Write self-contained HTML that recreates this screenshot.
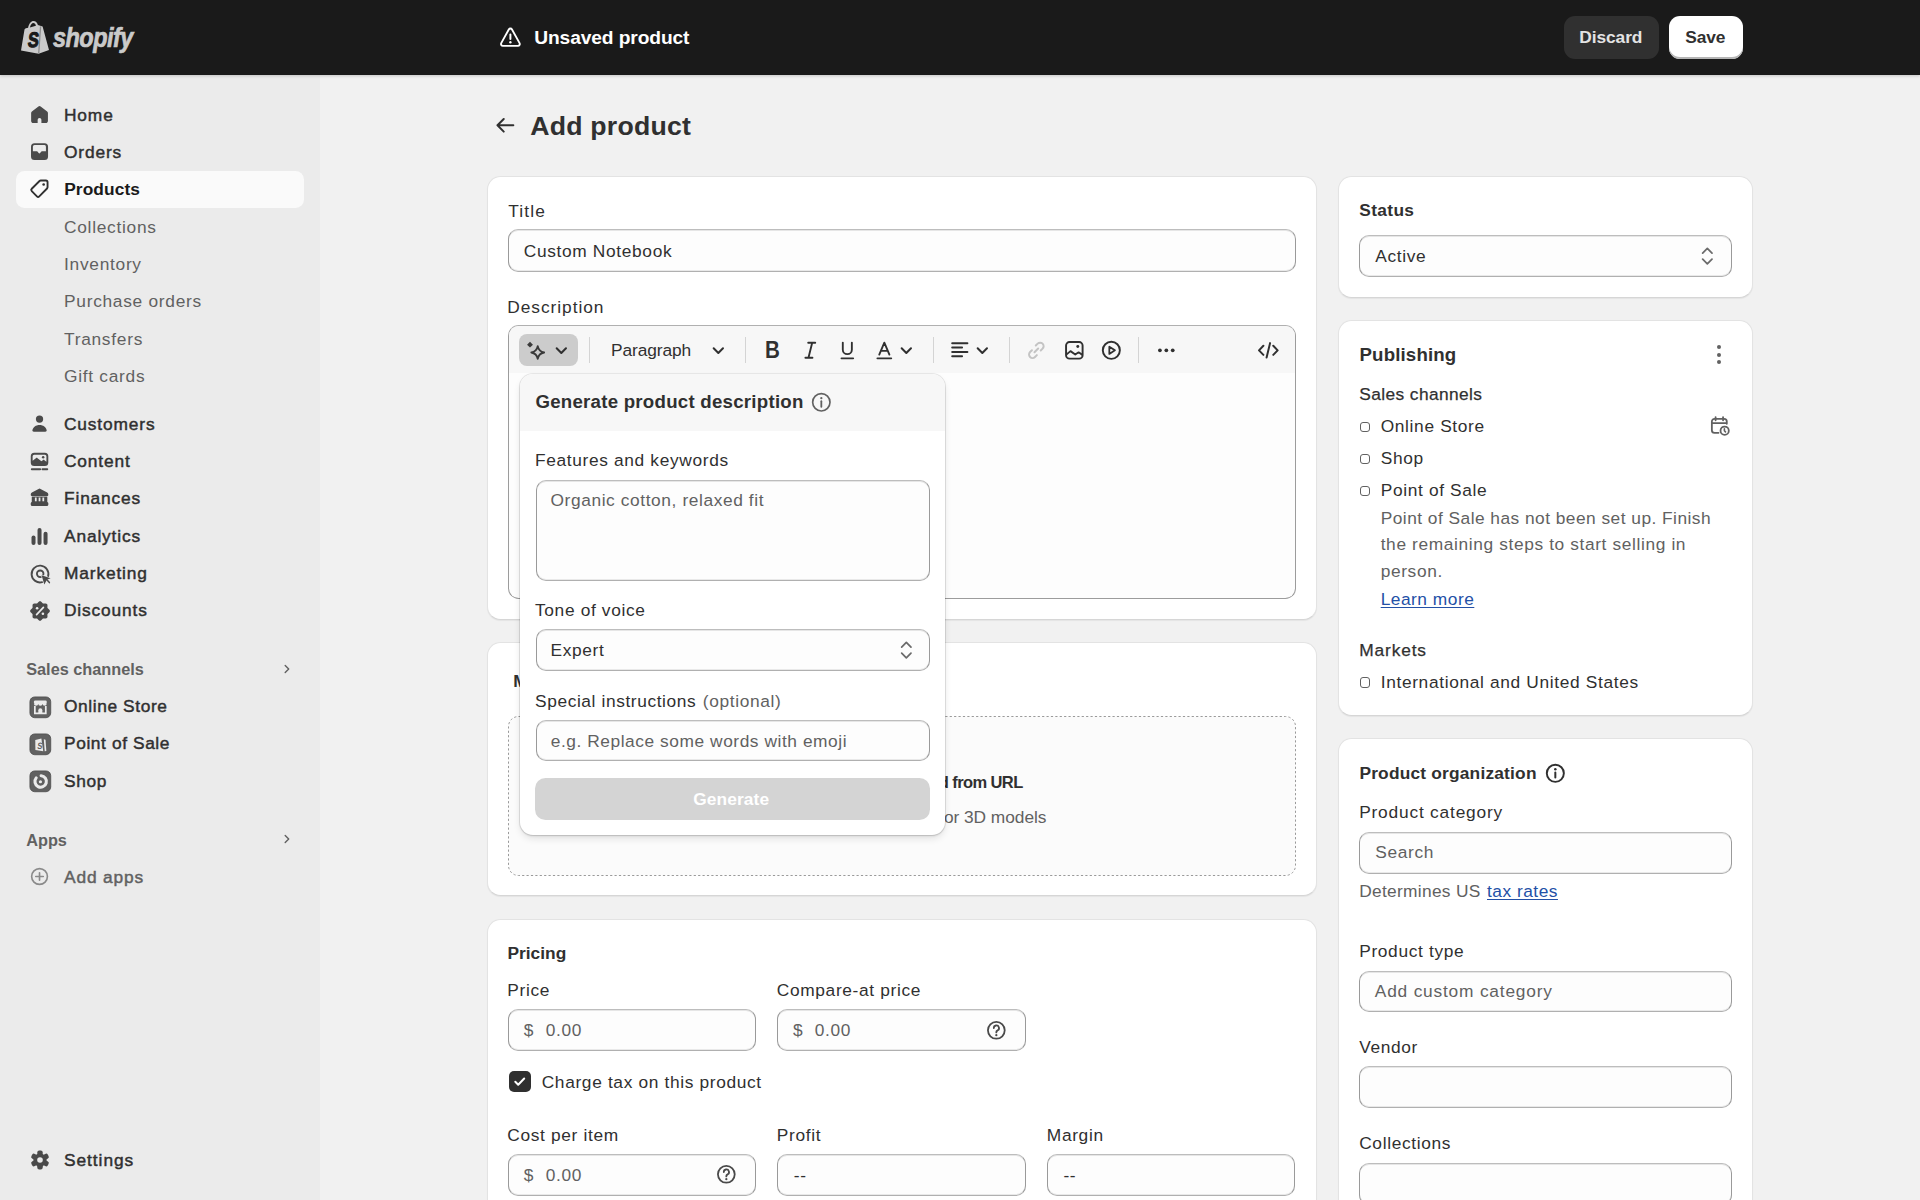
<!DOCTYPE html>
<html><head><meta charset="utf-8"><title>Add product</title>
<style>
html,body{margin:0;padding:0;}
body{width:1920px;height:1200px;overflow:hidden;position:relative;background:#f1f1f1;font-family:"Liberation Sans",sans-serif;color:#303030;}
.t{position:absolute;white-space:pre;}
.b{position:absolute;box-sizing:border-box;}
svg.b{overflow:visible;}
</style></head><body>
<div class="b" style="left:0px;top:75px;width:320px;height:1125px;background:#ebebeb;"></div>
<div class="b" style="left:0px;top:0px;width:1920px;height:75px;background:#1a1a1a;box-shadow:0 1px 3px rgba(0,0,0,0.18);z-index:5;"></div>
<div style="position:absolute;left:0;top:0;width:1920px;height:75px;z-index:6;">
<svg class="b" style="left:20px;top:20px;" width="30" height="34" viewBox="0 0 30 34"><path fill="#cacaca" d="M1 30.6 L4.5 9.6 Q4.8 8.5 6 8.3 L8.1 7.8 C8.9 3.4 11.2 1 13.5 1 C15.6 1 17.1 2.5 17.9 5.1 L22.6 6.5 L29 30.1 L18.6 33.7 Z"/>
<path fill="#1a1a1a" d="M9.9 7.4 C10.6 4.5 11.9 2.9 13.4 2.9 C14.6 2.9 15.5 3.9 15.9 5.7 Z"/>
<path stroke="#8e8e8e" stroke-width="1.3" d="M20.6 6.4 L18.7 33.5"/>
<text x="0" y="0" transform="translate(7.2,27.3) scale(0.78,1) skewX(-8)" font-family="Liberation Sans" font-weight="700" font-size="21" fill="#1a1a1a" stroke="#1a1a1a" stroke-width="1.1">S</text></svg>
</div>
<div class="t " style="left:52.7px;top:22.00px;font-size:27px;line-height:32px;font-weight:700;color:#cacaca;letter-spacing:-0.6px;font-style:italic;z-index:6;transform:scaleX(0.87);transform-origin:0 0;-webkit-text-stroke:0.7px #cacaca;">shopify</div>
<svg class="b" style="left:497.85px;top:25.200000000000003px;z-index:6;" width="24.8" height="24.8" viewBox="0 0 20 20"><path fill="none" stroke="#fff" stroke-width="1.5" stroke-linejoin="round" d="M8.7 3.6 a1.5 1.5 0 0 1 2.6 0 l6.1 11 a1.5 1.5 0 0 1 -1.3 2.2 H3.9 a1.5 1.5 0 0 1 -1.3 -2.2 Z"/>
<path stroke="#fff" stroke-width="1.6" stroke-linecap="round" d="M10 7.6 V11.2"/><circle cx="10" cy="13.9" r="0.95" fill="#fff"/></svg>
<div class="t " style="left:534.2px;top:25.70px;font-size:19.2px;line-height:23px;font-weight:700;color:#ffffff;letter-spacing:-0.1px;z-index:6;">Unsaved product</div>
<div class="b" style="left:1563.5px;top:16px;width:95px;height:42.5px;background:#303030;border-radius:11px;z-index:6;"></div>
<div class="t " style="left:1579.2px;top:27.30px;font-size:17.33px;line-height:21px;font-weight:700;color:#e3e3e3;letter-spacing:-0.05px;z-index:6;">Discard</div>
<div class="b" style="left:1669px;top:16px;width:74px;height:42.5px;background:#ffffff;border-radius:11px;box-shadow:inset 0 -2px 0 #b5b5b5;z-index:6;"></div>
<div class="t " style="left:1685.2px;top:27.30px;font-size:17.33px;line-height:21px;font-weight:700;color:#303030;letter-spacing:-0.05px;z-index:6;">Save</div>
<div class="b" style="left:16px;top:171px;width:288px;height:37px;background:#fafafa;border-radius:8.5px;"></div>
<div class="t " style="left:64.0px;top:104.75px;font-size:17.33px;line-height:21px;font-weight:400;color:#303030;letter-spacing:0.85px;-webkit-text-stroke:0.45px #303030;">Home</div>
<svg class="b" style="left:27.4651px;top:101.7151px;" width="25.0698" height="25.0698" viewBox="0 0 20 20"><path fill="#4a4a4a" d="M9.1 3.5a1.5 1.5 0 0 1 1.8 0l5.2 4.1c.4.3.6.8.6 1.2v6.3c0 1-.8 1.7-1.7 1.7h-3.5v-2.6a1.5 1.5 0 0 0-3 0v2.6H5c-1 0-1.7-.8-1.7-1.7V8.8c0-.5.2-.9.6-1.2z"/></svg>
<div class="t " style="left:64.0px;top:142.00px;font-size:17.33px;line-height:21px;font-weight:400;color:#303030;letter-spacing:0.85px;-webkit-text-stroke:0.45px #303030;">Orders</div>
<svg class="b" style="left:27.4651px;top:138.9651px;" width="25.0698" height="25.0698" viewBox="0 0 20 20"><path fill="#4a4a4a" fill-rule="evenodd" d="M6 3.3h8a2.8 2.8 0 0 1 2.8 2.8v7.8a2.8 2.8 0 0 1-2.8 2.8H6a2.8 2.8 0 0 1-2.8-2.8V6.1A2.8 2.8 0 0 1 6 3.3zM6 4.8a1.3 1.3 0 0 0-1.3 1.3v3.7h3.1c.4 0 .7.2.9.5l.6.9c.3.4.9.4 1.2 0l.6-.9c.2-.3.5-.5.9-.5h3.1V6.1A1.3 1.3 0 0 0 14 4.8z"/></svg>
<div class="t " style="left:64.2px;top:179.25px;font-size:17.33px;line-height:21px;font-weight:700;color:#1a1a1a;letter-spacing:0.1px;">Products</div>
<svg class="b" style="left:27.4651px;top:176.2151px;" width="25.0698" height="25.0698" viewBox="0 0 20 20"><path fill="none" stroke="#303030" stroke-width="1.5" stroke-linejoin="round" d="M11 3.6h4.1c.7 0 1.3.6 1.3 1.3V9c0 .4-.2.7-.4 1l-6.2 6.2c-.5.5-1.4.5-1.9 0L3.8 12.1c-.5-.5-.5-1.4 0-1.9L10 4c.3-.3.6-.4 1-.4z"/><circle cx="13.3" cy="6.8" r="1.05" fill="#303030"/></svg>
<div class="t " style="left:64.0px;top:216.60px;font-size:17.33px;line-height:21px;font-weight:400;color:#616161;letter-spacing:0.72px;">Collections</div>
<div class="t " style="left:64.0px;top:254.00px;font-size:17.33px;line-height:21px;font-weight:400;color:#616161;letter-spacing:0.72px;">Inventory</div>
<div class="t " style="left:64.0px;top:291.30px;font-size:17.33px;line-height:21px;font-weight:400;color:#616161;letter-spacing:0.72px;">Purchase orders</div>
<div class="t " style="left:64.0px;top:328.60px;font-size:17.33px;line-height:21px;font-weight:400;color:#616161;letter-spacing:0.72px;">Transfers</div>
<div class="t " style="left:64.0px;top:365.90px;font-size:17.33px;line-height:21px;font-weight:400;color:#616161;letter-spacing:0.72px;">Gift cards</div>
<div class="t " style="left:64.0px;top:413.60px;font-size:17.33px;line-height:21px;font-weight:400;color:#303030;letter-spacing:0.85px;-webkit-text-stroke:0.45px #303030;">Customers</div>
<svg class="b" style="left:27.4651px;top:410.56510000000003px;" width="25.0698" height="25.0698" viewBox="0 0 20 20"><circle cx="10" cy="6.4" r="2.9" fill="#4a4a4a"/><path fill="#4a4a4a" d="M4.3 15.4c.4-2.6 2.8-4.3 5.7-4.3s5.3 1.7 5.7 4.3c.1.7-.4 1.1-1.1 1.1H5.4c-.7 0-1.2-.4-1.1-1.1z"/></svg>
<div class="t " style="left:64.0px;top:450.90px;font-size:17.33px;line-height:21px;font-weight:400;color:#303030;letter-spacing:0.85px;-webkit-text-stroke:0.45px #303030;">Content</div>
<svg class="b" style="left:27.4651px;top:448.6651px;" width="25.0698" height="25.0698" viewBox="0 0 20 20"><path fill="#4a4a4a" fill-rule="evenodd" d="M5.8 3h8.4A2.8 2.8 0 0 1 17 5.8v4.9a2.8 2.8 0 0 1-2.8 2.8H5.8A2.8 2.8 0 0 1 3 10.7V5.8A2.8 2.8 0 0 1 5.8 3zm0 1.5a1.3 1.3 0 0 0-1.3 1.3v3.6l2.6-2.1c.4-.3.9-.3 1.3 0l3.1 2.4 1.1-.8c.4-.3.9-.3 1.3 0l1.6 1.2V5.8a1.3 1.3 0 0 0-1.3-1.3z"/><circle cx="12.9" cy="6.6" r="1" fill="#4a4a4a"/><path stroke="#4a4a4a" stroke-width="1.5" stroke-linecap="round" d="M3.8 16.2h6.7M12.3 16.2h3.9"/></svg>
<div class="t " style="left:64.0px;top:488.20px;font-size:17.33px;line-height:21px;font-weight:400;color:#303030;letter-spacing:0.85px;-webkit-text-stroke:0.45px #303030;">Finances</div>
<svg class="b" style="left:27.4651px;top:485.1651px;" width="25.0698" height="25.0698" viewBox="0 0 20 20"><path fill="#4a4a4a" d="M9.2 3.1a1.7 1.7 0 0 1 1.6 0l5.3 2.9c.6.3.9.9.9 1.5v.5c0 .4-.3.7-.7.7H3.7c-.4 0-.7-.3-.7-.7v-.5c0-.6.3-1.2.9-1.5z"/><rect x="3.8" y="9.2" width="12.4" height="4.6" fill="#4a4a4a"/><rect x="6.3" y="10" width="1.4" height="3" fill="#ebebeb"/><rect x="9.3" y="10" width="1.4" height="3" fill="#ebebeb"/><rect x="12.3" y="10" width="1.4" height="3" fill="#ebebeb"/><rect x="3" y="13.6" width="14" height="3.2" rx="1.1" fill="#4a4a4a"/></svg>
<div class="t " style="left:64.0px;top:525.50px;font-size:17.33px;line-height:21px;font-weight:400;color:#303030;letter-spacing:0.85px;-webkit-text-stroke:0.45px #303030;">Analytics</div>
<svg class="b" style="left:27.4651px;top:524.1651px;" width="25.0698" height="25.0698" viewBox="0 0 20 20"><rect x="3.6" y="9.2" width="3.2" height="7.6" rx="1.6" fill="#4a4a4a"/><rect x="8.4" y="3.2" width="3.2" height="13.6" rx="1.6" fill="#4a4a4a"/><rect x="13.2" y="6.2" width="3.2" height="10.6" rx="1.6" fill="#4a4a4a"/></svg>
<div class="t " style="left:64.0px;top:562.80px;font-size:17.33px;line-height:21px;font-weight:400;color:#303030;letter-spacing:0.85px;-webkit-text-stroke:0.45px #303030;">Marketing</div>
<svg class="b" style="left:26px;top:559.5px;" width="28" height="28" viewBox="0 0 28 28"><path fill="none" stroke="#4a4a4a" stroke-width="1.9" stroke-linecap="round" d="M16.17 22.11A8.4 8.4 0 1 1 22.11 16.17"/><circle cx="14.2" cy="13.8" r="3.3" fill="none" stroke="#4a4a4a" stroke-width="1.8"/><path fill="#4a4a4a" stroke="#ebebeb" stroke-width="1.1" paint-order="stroke" stroke-linejoin="round" d="M15.6 15.3L24.6 18.3 20.9 19.8 18.3 24.6Z"/><path stroke="#4a4a4a" stroke-width="1.5" stroke-linecap="round" d="M20.6 19.6L23.4 22.6"/></svg>
<div class="t " style="left:64.0px;top:600.10px;font-size:17.33px;line-height:21px;font-weight:400;color:#303030;letter-spacing:0.85px;-webkit-text-stroke:0.45px #303030;">Discounts</div>
<svg class="b" style="left:26.1px;top:596.7px;" width="28" height="28" viewBox="0 0 28 28"><path fill="#4a4a4a" d="M23.85 14.00 L23.72 14.64 L23.34 15.23 L22.83 15.76 L22.28 16.22 L21.83 16.66 L21.53 17.12 L21.41 17.66 L21.43 18.29 L21.48 19.00 L21.48 19.74 L21.32 20.42 L20.97 20.97 L20.42 21.32 L19.74 21.48 L19.00 21.48 L18.29 21.43 L17.66 21.41 L17.12 21.53 L16.66 21.83 L16.22 22.28 L15.76 22.83 L15.23 23.34 L14.64 23.72 L14.00 23.85 L13.36 23.72 L12.77 23.34 L12.24 22.83 L11.78 22.28 L11.34 21.83 L10.88 21.53 L10.34 21.41 L9.71 21.43 L9.00 21.48 L8.26 21.48 L7.58 21.32 L7.03 20.97 L6.68 20.42 L6.52 19.74 L6.52 19.00 L6.57 18.29 L6.59 17.66 L6.47 17.12 L6.17 16.66 L5.72 16.22 L5.17 15.76 L4.66 15.23 L4.28 14.64 L4.15 14.00 L4.28 13.36 L4.66 12.77 L5.17 12.24 L5.72 11.78 L6.17 11.34 L6.47 10.88 L6.59 10.34 L6.57 9.71 L6.52 9.00 L6.52 8.26 L6.68 7.58 L7.03 7.03 L7.58 6.68 L8.26 6.52 L9.00 6.52 L9.71 6.57 L10.34 6.59 L10.88 6.47 L11.34 6.17 L11.78 5.72 L12.24 5.17 L12.77 4.66 L13.36 4.28 L14.00 4.15 L14.64 4.28 L15.23 4.66 L15.76 5.17 L16.22 5.72 L16.66 6.17 L17.12 6.47 L17.66 6.59 L18.29 6.57 L19.00 6.52 L19.74 6.52 L20.42 6.68 L20.97 7.03 L21.32 7.58 L21.48 8.26 L21.48 9.00 L21.43 9.71 L21.41 10.34 L21.53 10.88 L21.83 11.34 L22.28 11.78 L22.83 12.24 L23.34 12.77 L23.72 13.36Z"/><path stroke="#ebebeb" stroke-width="1.7" stroke-linecap="round" d="M10.6 17.6L17.4 10.4"/><circle cx="11.1" cy="11.3" r="1.3" fill="#ebebeb"/><circle cx="16.9" cy="16.8" r="1.3" fill="#ebebeb"/></svg>
<div class="t " style="left:26.2px;top:659.20px;font-size:16.3px;line-height:20px;font-weight:700;color:#616161;letter-spacing:0px;">Sales channels</div>
<svg class="b" style="left:277px;top:659px;" width="20" height="20" viewBox="0 0 20 20"><path fill="none" stroke="#616161" stroke-width="1.4" stroke-linecap="round" stroke-linejoin="round" d="M8.2 6.5l3.5 3.5-3.5 3.5"/></svg>
<div class="t " style="left:64.0px;top:696.00px;font-size:17.33px;line-height:21px;font-weight:400;color:#303030;letter-spacing:0.6px;-webkit-text-stroke:0.45px #303030;">Online Store</div>
<svg class="b" style="left:26.67px;top:693.5699999999999px;" width="26.67" height="26.67" viewBox="0 0 20 20"><rect x="2.2" y="2.2" width="15.6" height="15.6" rx="3.6" fill="#616161"/><rect x="2.2" y="2.2" width="15.6" height="15.6" rx="3.6" fill="none" stroke="#4a4a4a" stroke-width="0.6"/><rect x="5.2" y="4.9" width="9.6" height="2.6" rx="0.9" fill="#ebebeb"/><path fill="#ebebeb" d="M5.2 7.3h3.2a1.6 1.6 0 0 1-3.2 0zM8.4 7.3h3.2a1.6 1.6 0 0 1-3.2 0zM11.6 7.3h3.2a1.6 1.6 0 0 1-3.2 0z"/><path fill="none" stroke="#ebebeb" stroke-width="1.3" d="M5.9 9v5.5h8.2V9"/><path fill="#ebebeb" d="M8.5 14.6v-2.4a1.5 1.5 0 0 1 3 0v2.4z"/></svg>
<div class="t " style="left:64.0px;top:733.40px;font-size:17.33px;line-height:21px;font-weight:400;color:#303030;letter-spacing:0.6px;-webkit-text-stroke:0.45px #303030;">Point of Sale</div>
<svg class="b" style="left:26.67px;top:730.9699999999999px;" width="26.67" height="26.67" viewBox="0 0 20 20"><rect x="2.2" y="2.2" width="15.6" height="15.6" rx="3.6" fill="#616161"/><rect x="2.2" y="2.2" width="15.6" height="15.6" rx="3.6" fill="none" stroke="#4a4a4a" stroke-width="0.6"/><path fill="#ebebeb" d="M6.2 6.8l4.6-1.2 1.4 9.6-5.9-.9z"/><path fill="#ebebeb" d="M12.6 6.2l1.3.4.6 8.4-1.2.2z"/><text x="0" y="0" transform="translate(7.5,13.3) scale(0.8,1) skewX(-10)" font-family="Liberation Sans" font-weight="700" font-size="7" fill="#616161">S</text></svg>
<div class="t " style="left:64.0px;top:770.70px;font-size:17.33px;line-height:21px;font-weight:400;color:#303030;letter-spacing:0.6px;-webkit-text-stroke:0.45px #303030;">Shop</div>
<svg class="b" style="left:26.67px;top:768.27px;" width="26.67" height="26.67" viewBox="0 0 20 20"><rect x="2.2" y="2.2" width="15.6" height="15.6" rx="3.6" fill="#616161"/><rect x="2.2" y="2.2" width="15.6" height="15.6" rx="3.6" fill="none" stroke="#4a4a4a" stroke-width="0.6"/><path fill="none" stroke="#ebebeb" stroke-width="2.3" stroke-linecap="round" d="M6.9 7.4A4.3 4.3 0 1 0 10.6 5.8"/><circle cx="10.1" cy="10.3" r="1.2" fill="#ebebeb"/></svg>
<div class="t " style="left:26.2px;top:829.90px;font-size:16.3px;line-height:20px;font-weight:700;color:#616161;letter-spacing:0px;">Apps</div>
<svg class="b" style="left:277px;top:829px;" width="20" height="20" viewBox="0 0 20 20"><path fill="none" stroke="#616161" stroke-width="1.4" stroke-linecap="round" stroke-linejoin="round" d="M8.2 6.5l3.5 3.5-3.5 3.5"/></svg>
<div class="t " style="left:64.0px;top:866.70px;font-size:17.33px;line-height:21px;font-weight:400;color:#616161;letter-spacing:0.85px;-webkit-text-stroke:0.45px #616161;">Add apps</div>
<svg class="b" style="left:27.4651px;top:863.9651px;" width="25.0698" height="25.0698" viewBox="0 0 20 20"><circle cx="10" cy="10" r="6.3" fill="none" stroke="#8a8a8a" stroke-width="1.3"/><path stroke="#8a8a8a" stroke-width="1.3" stroke-linecap="round" d="M10 7v6M7 10h6"/></svg>
<div class="t " style="left:64.0px;top:1149.80px;font-size:17.33px;line-height:21px;font-weight:400;color:#303030;letter-spacing:0.95px;-webkit-text-stroke:0.45px #303030;">Settings</div>
<svg class="b" style="left:26px;top:1145.8px;" width="28" height="28" viewBox="0 0 28 28"><circle cx="14" cy="14" r="6.6" fill="#4a4a4a"/><rect x="11.3" y="4.6" width="5.4" height="5" rx="1.9" transform="rotate(0 14 14)" fill="#4a4a4a"/><rect x="11.3" y="4.6" width="5.4" height="5" rx="1.9" transform="rotate(60 14 14)" fill="#4a4a4a"/><rect x="11.3" y="4.6" width="5.4" height="5" rx="1.9" transform="rotate(120 14 14)" fill="#4a4a4a"/><rect x="11.3" y="4.6" width="5.4" height="5" rx="1.9" transform="rotate(180 14 14)" fill="#4a4a4a"/><rect x="11.3" y="4.6" width="5.4" height="5" rx="1.9" transform="rotate(240 14 14)" fill="#4a4a4a"/><rect x="11.3" y="4.6" width="5.4" height="5" rx="1.9" transform="rotate(300 14 14)" fill="#4a4a4a"/><circle cx="14" cy="14" r="2.8" fill="#ebebeb"/></svg>
<svg class="b" style="left:492.3px;top:112.4px;" width="26.67" height="26.67" viewBox="0 0 20 20"><path fill="none" stroke="#303030" stroke-width="1.5" stroke-linecap="round" stroke-linejoin="round" d="M16 10H4.3M8.8 5.3L4.1 10l4.7 4.7"/></svg>
<div class="t " style="left:530.2px;top:110.00px;font-size:26.67px;line-height:32px;font-weight:700;color:#303030;letter-spacing:0.22px;">Add product</div>
<div class="b" style="left:487px;top:176px;width:830px;height:444px;background:#ffffff;border-radius:13.5px;border:1px solid #e3e3e3;border-bottom-color:#d6d6d6;box-shadow:0 1px 1px rgba(26,26,26,0.06);"></div>
<div class="t " style="left:508.3px;top:200.50px;font-size:17.33px;line-height:21px;font-weight:400;color:#303030;letter-spacing:1.1px;">Title</div>
<div class="b" style="left:508px;top:229px;width:788px;height:43px;background:#fdfdfd;border:1px solid #9a9a9a;border-top-color:#bdbdbd;border-bottom-color:#b0b0b0;box-shadow:inset 0 1px 0 #e6e6e6, inset 0 -1px 0 #e9e9e9;border-radius:10px;"></div>
<div class="t " style="left:523.8px;top:240.50px;font-size:17.33px;line-height:21px;font-weight:400;color:#303030;letter-spacing:0.65px;">Custom Notebook</div>
<div class="t " style="left:507.3px;top:296.50px;font-size:17.33px;line-height:21px;font-weight:400;color:#303030;letter-spacing:0.95px;">Description</div>
<div class="b" style="left:508px;top:325px;width:788px;height:274px;background:#fdfdfd;border:1px solid #9c9c9c;border-top-color:#b0b0b0;border-radius:10.67px;overflow:hidden;"></div>
<div class="b" style="left:509px;top:326px;width:786px;height:47px;background:#f7f7f7;border-radius:9.67px 9.67px 0 0;"></div>
<div class="b" style="left:519.2px;top:334px;width:58.5px;height:31.6px;background:#cccccc;border-radius:8px;"></div>
<svg class="b" style="left:524.3px;top:336.3px;" width="26.67" height="26.67" viewBox="0 0 20 20"><path fill="#3a3a3a" d="M4.5 4.3l2.2 2.2-2.2 2.2-2.2-2.2z"/><path fill="none" stroke="#3a3a3a" stroke-width="1.4" stroke-linejoin="round" d="M10.3 7.6c.55 2.9 1.9 4.25 4.8 4.8-2.9.55-4.25 1.9-4.8 4.8-.55-2.9-1.9-4.25-4.8-4.8 2.9-.55 4.25-1.9 4.8-4.8z"/></svg>
<svg class="b" style="left:548.4699999999999px;top:336.97px;" width="26.67" height="26.67" viewBox="0 0 20 20"><path fill="none" stroke="#303030" stroke-width="1.5" stroke-linecap="round" stroke-linejoin="round" d="M6.5 8.5L10 12l3.5-3.5"/></svg>
<div class="b" style="left:588.9px;top:337px;width:1px;height:25.5px;background:#d4d4d4;"></div>
<div class="t " style="left:611.0px;top:340.00px;font-size:17.33px;line-height:21px;font-weight:400;color:#303030;letter-spacing:-0.1px;">Paragraph</div>
<svg class="b" style="left:704.77px;top:336.97px;" width="26.67" height="26.67" viewBox="0 0 20 20"><path fill="none" stroke="#303030" stroke-width="1.5" stroke-linecap="round" stroke-linejoin="round" d="M6.5 8.5L10 12l3.5-3.5"/></svg>
<div class="b" style="left:745.0px;top:337px;width:1px;height:25.5px;background:#d4d4d4;"></div>
<div class="t " style="left:764.7px;top:335.70px;font-size:24.5px;line-height:28px;font-weight:700;color:#303030;letter-spacing:0px;transform:scaleX(0.84);transform-origin:left;">B</div>
<svg class="b" style="left:796.6px;top:336.5px;" width="26.67" height="26.67" viewBox="0 0 20 20"><path fill="none" stroke="#303030" stroke-width="1.4" stroke-linecap="round" d="M8.4 4.3h5.3M6.3 15.6h5.3M11.4 4.3L8.6 15.6"/></svg>
<svg class="b" style="left:834.0px;top:336.5px;" width="26.67" height="26.67" viewBox="0 0 20 20"><path fill="none" stroke="#303030" stroke-width="1.4" stroke-linecap="round" d="M6.6 4.2v5.3a3.4 3.4 0 0 0 6.8 0V4.2M5.6 16h8.8"/></svg>
<svg class="b" style="left:871.4px;top:336.5px;" width="26.67" height="26.67" viewBox="0 0 20 20"><path fill="none" stroke="#303030" stroke-width="1.4" stroke-linecap="round" stroke-linejoin="round" d="M6.2 13.2L10 4.2l3.8 9M7.4 10.4h5.2M4.8 16h10.4"/></svg>
<svg class="b" style="left:892.67px;top:336.97px;" width="26.67" height="26.67" viewBox="0 0 20 20"><path fill="none" stroke="#303030" stroke-width="1.5" stroke-linecap="round" stroke-linejoin="round" d="M6.5 8.5L10 12l3.5-3.5"/></svg>
<div class="b" style="left:933.0px;top:337px;width:1px;height:25.5px;background:#d4d4d4;"></div>
<svg class="b" style="left:947.3px;top:336.5px;" width="26.67" height="26.67" viewBox="0 0 20 20"><path fill="none" stroke="#303030" stroke-width="1.5" stroke-linecap="round" d="M3.9 4.6h11.4M3.9 7.9h7.4M3.9 11.2h11.4M3.9 14.5h7.4"/></svg>
<svg class="b" style="left:968.67px;top:336.97px;" width="26.67" height="26.67" viewBox="0 0 20 20"><path fill="none" stroke="#303030" stroke-width="1.5" stroke-linecap="round" stroke-linejoin="round" d="M6.5 8.5L10 12l3.5-3.5"/></svg>
<div class="b" style="left:1008.9px;top:337px;width:1px;height:25.5px;background:#d4d4d4;"></div>
<svg class="b" style="left:1023.3px;top:336.5px;" width="26.67" height="26.67" viewBox="0 0 20 20"><path fill="none" stroke="#c4c4c4" stroke-width="1.5" stroke-linecap="round" d="M8.6 11.4l2.8-2.8M9.6 6.4l1.4-1.4a2.6 2.6 0 0 1 3.7 3.7l-1.4 1.4M10.4 13.6l-1.4 1.4a2.6 2.6 0 0 1-3.7-3.7l1.4-1.4"/></svg>
<svg class="b" style="left:1060.6px;top:336.5px;" width="26.67" height="26.67" viewBox="0 0 20 20"><rect x="3.8" y="3.8" width="12.4" height="12.4" rx="2.6" fill="none" stroke="#303030" stroke-width="1.45"/><circle cx="12.6" cy="7.1" r="1.1" fill="#303030"/><path fill="none" stroke="#303030" stroke-width="1.4" stroke-linejoin="round" d="M4 13.2l3.1-2.6 3.6 2.6 2.5-1.7 2.9 1.9"/></svg>
<svg class="b" style="left:1098.1px;top:336.5px;" width="26.67" height="26.67" viewBox="0 0 20 20"><circle cx="10" cy="10" r="6.4" fill="none" stroke="#303030" stroke-width="1.45"/><path fill="none" stroke="#303030" stroke-width="1.35" stroke-linejoin="round" d="M8.5 7.3v5.4l4.2-2.7z"/></svg>
<div class="b" style="left:1137.8px;top:337px;width:1px;height:25.5px;background:#d4d4d4;"></div>
<svg class="b" style="left:1152.7px;top:336.5px;" width="26.67" height="26.67" viewBox="0 0 20 20"><circle cx="5.2" cy="10" r="1.4" fill="#303030"/><circle cx="10" cy="10" r="1.4" fill="#303030"/><circle cx="14.8" cy="10" r="1.4" fill="#303030"/></svg>
<svg class="b" style="left:1254.6px;top:336.5px;" width="26.67" height="26.67" viewBox="0 0 20 20"><path fill="none" stroke="#303030" stroke-width="1.5" stroke-linecap="round" stroke-linejoin="round" d="M6.3 6.6L3 10l3.3 3.4M13.7 6.6L17 10l-3.3 3.4M11.3 4.6l-2.6 10.8"/></svg>
<div class="b" style="left:487px;top:642px;width:830px;height:254px;background:#ffffff;border-radius:13.5px;border:1px solid #e3e3e3;border-bottom-color:#d6d6d6;box-shadow:0 1px 1px rgba(26,26,26,0.06);"></div>
<div class="t " style="left:513.2px;top:670.50px;font-size:17.33px;line-height:21px;font-weight:700;color:#303030;letter-spacing:0px;">Media</div>
<svg class="b" style="left:508px;top:716px;" width="788" height="160" viewBox="0 0 788 160"><rect x="0.5" y="0.5" width="787" height="159" rx="10" fill="#fbfbfb" stroke="#9a9a9a" stroke-width="1" stroke-dasharray="2.2 2.2"/></svg>
<div class="b" style="left:780px;top:765.5px;width:120px;height:37.3px;background:#ffffff;border-radius:10.67px;box-shadow:0 0 0 1px #e3e3e3, inset 0 -1px 0 #b5b5b5;"></div>
<div class="t " style="left:795.2px;top:771.90px;font-size:17.33px;line-height:21px;font-weight:700;color:#303030;letter-spacing:0px;">Upload new</div>
<div class="t " style="left:918.0px;top:772.40px;font-size:16.5px;line-height:20px;font-weight:700;color:#303030;letter-spacing:-0.6px;">Add from URL</div>
<div class="t " style="left:753.5px;top:806.70px;font-size:17.33px;line-height:21px;font-weight:400;color:#616161;letter-spacing:-0.05px;">Accepts images, videos, or 3D models</div>
<div class="b" style="left:487px;top:919px;width:830px;height:320px;background:#ffffff;border-radius:13.5px;border:1px solid #e3e3e3;border-bottom-color:#d6d6d6;box-shadow:0 1px 1px rgba(26,26,26,0.06);"></div>
<div class="t " style="left:507.5px;top:943.20px;font-size:17.33px;line-height:21px;font-weight:700;color:#303030;letter-spacing:0px;">Pricing</div>
<div class="t " style="left:507.3px;top:979.90px;font-size:17.33px;line-height:21px;font-weight:400;color:#303030;letter-spacing:0.65px;">Price</div>
<div class="t " style="left:776.8px;top:979.90px;font-size:17.33px;line-height:21px;font-weight:400;color:#303030;letter-spacing:0.65px;">Compare-at price</div>
<div class="b" style="left:508.1px;top:1009.2px;width:248px;height:42.2px;background:#fdfdfd;border:1px solid #9a9a9a;border-top-color:#bdbdbd;border-bottom-color:#b0b0b0;box-shadow:inset 0 1px 0 #e6e6e6, inset 0 -1px 0 #e9e9e9;border-radius:10px;"></div>
<div class="b" style="left:777.2px;top:1009.2px;width:248.5px;height:42.2px;background:#fdfdfd;border:1px solid #9a9a9a;border-top-color:#bdbdbd;border-bottom-color:#b0b0b0;box-shadow:inset 0 1px 0 #e6e6e6, inset 0 -1px 0 #e9e9e9;border-radius:10px;"></div>
<div class="t " style="left:523.8px;top:1019.80px;font-size:17.33px;line-height:21px;font-weight:400;color:#616161;letter-spacing:0.65px;">$</div>
<div class="t " style="left:545.7px;top:1019.80px;font-size:17.33px;line-height:21px;font-weight:400;color:#616161;letter-spacing:0.65px;">0.00</div>
<div class="t " style="left:792.9px;top:1019.80px;font-size:17.33px;line-height:21px;font-weight:400;color:#616161;letter-spacing:0.65px;">$</div>
<div class="t " style="left:814.8px;top:1019.80px;font-size:17.33px;line-height:21px;font-weight:400;color:#616161;letter-spacing:0.65px;">0.00</div>
<svg class="b" style="left:982.9699999999999px;top:1016.9699999999999px;" width="26.67" height="26.67" viewBox="0 0 20 20"><circle cx="10" cy="10" r="6.3" fill="none" stroke="#4a4a4a" stroke-width="1.35"/><path fill="none" stroke="#4a4a4a" stroke-width="1.35" stroke-linecap="round" d="M8.1 8.3a1.95 1.95 0 1 1 2.9 1.7c-.6.3-1 .7-1 1.3v.3"/><circle cx="10" cy="13.6" r="0.85" fill="#4a4a4a"/></svg>
<div class="b" style="left:509.1px;top:1071px;width:21.5px;height:21px;background:#303030;border-radius:5px;"></div>
<svg class="b" style="left:509.1px;top:1071px;" width="21.5" height="21" viewBox="0 0 21.5 21"><path fill="none" stroke="#fff" stroke-width="2" stroke-linecap="round" stroke-linejoin="round" d="M6.3 10.8l2.9 2.9 6-6.2"/></svg>
<div class="t " style="left:541.7px;top:1071.50px;font-size:17.33px;line-height:21px;font-weight:400;color:#303030;letter-spacing:0.65px;">Charge tax on this product</div>
<div class="t " style="left:507.3px;top:1124.50px;font-size:17.33px;line-height:21px;font-weight:400;color:#303030;letter-spacing:0.65px;">Cost per item</div>
<div class="t " style="left:776.8px;top:1124.50px;font-size:17.33px;line-height:21px;font-weight:400;color:#303030;letter-spacing:0.65px;">Profit</div>
<div class="t " style="left:1046.8px;top:1124.50px;font-size:17.33px;line-height:21px;font-weight:400;color:#303030;letter-spacing:0.65px;">Margin</div>
<div class="b" style="left:508.1px;top:1153.9px;width:248px;height:42.2px;background:#fdfdfd;border:1px solid #9a9a9a;border-top-color:#bdbdbd;border-bottom-color:#b0b0b0;box-shadow:inset 0 1px 0 #e6e6e6, inset 0 -1px 0 #e9e9e9;border-radius:10px;"></div>
<div class="b" style="left:777.2px;top:1153.9px;width:248.5px;height:42.2px;background:#fdfdfd;border:1px solid #9a9a9a;border-top-color:#bdbdbd;border-bottom-color:#b0b0b0;box-shadow:inset 0 1px 0 #e6e6e6, inset 0 -1px 0 #e9e9e9;border-radius:10px;"></div>
<div class="b" style="left:1047.4px;top:1153.9px;width:248px;height:42.2px;background:#fdfdfd;border:1px solid #9a9a9a;border-top-color:#bdbdbd;border-bottom-color:#b0b0b0;box-shadow:inset 0 1px 0 #e6e6e6, inset 0 -1px 0 #e9e9e9;border-radius:10px;"></div>
<div class="t " style="left:523.8px;top:1164.50px;font-size:17.33px;line-height:21px;font-weight:400;color:#616161;letter-spacing:0.65px;">$</div>
<div class="t " style="left:545.7px;top:1164.50px;font-size:17.33px;line-height:21px;font-weight:400;color:#616161;letter-spacing:0.65px;">0.00</div>
<svg class="b" style="left:712.9699999999999px;top:1160.97px;" width="26.67" height="26.67" viewBox="0 0 20 20"><circle cx="10" cy="10" r="6.3" fill="none" stroke="#4a4a4a" stroke-width="1.35"/><path fill="none" stroke="#4a4a4a" stroke-width="1.35" stroke-linecap="round" d="M8.1 8.3a1.95 1.95 0 1 1 2.9 1.7c-.6.3-1 .7-1 1.3v.3"/><circle cx="10" cy="13.6" r="0.85" fill="#4a4a4a"/></svg>
<div class="t " style="left:793.8px;top:1164.50px;font-size:17.33px;line-height:21px;font-weight:400;color:#303030;letter-spacing:0.65px;">--</div>
<div class="t " style="left:1063.4px;top:1164.50px;font-size:17.33px;line-height:21px;font-weight:400;color:#303030;letter-spacing:0.65px;">--</div>
<div class="b" style="left:1338px;top:176px;width:415px;height:122px;background:#ffffff;border-radius:13.5px;border:1px solid #e3e3e3;border-bottom-color:#d6d6d6;box-shadow:0 1px 1px rgba(26,26,26,0.06);"></div>
<div class="t " style="left:1359.3px;top:200.10px;font-size:17.33px;line-height:21px;font-weight:700;color:#303030;letter-spacing:0.35px;">Status</div>
<div class="b" style="left:1359.4px;top:234.7px;width:372.3px;height:42.6px;background:#fdfdfd;border:1px solid #9a9a9a;border-top-color:#bdbdbd;border-bottom-color:#b0b0b0;box-shadow:inset 0 1px 0 #e6e6e6, inset 0 -1px 0 #e9e9e9;border-radius:10px;"></div>
<div class="t " style="left:1375.2px;top:245.60px;font-size:17.33px;line-height:21px;font-weight:400;color:#303030;letter-spacing:0.65px;">Active</div>
<svg class="b" style="left:1694.27px;top:242.67px;" width="26.67" height="26.67" viewBox="0 0 20 20"><path fill="none" stroke="#6b6b6b" stroke-width="1.3" stroke-linecap="round" stroke-linejoin="round" d="M6.5 7.6L10 4.1l3.5 3.5M6.5 12.1L10 15.6l3.5-3.5"/></svg>
<div class="b" style="left:1338px;top:320px;width:415px;height:396px;background:#ffffff;border-radius:13.5px;border:1px solid #e3e3e3;border-bottom-color:#d6d6d6;box-shadow:0 1px 1px rgba(26,26,26,0.06);"></div>
<div class="t " style="left:1359.5px;top:344.20px;font-size:18.67px;line-height:22px;font-weight:700;color:#303030;letter-spacing:0.15px;">Publishing</div>
<div class="b" style="left:1716.5px;top:345.2px;width:4px;height:4px;background:#616161;border-radius:50%;"></div>
<div class="b" style="left:1716.5px;top:352.7px;width:4px;height:4px;background:#616161;border-radius:50%;"></div>
<div class="b" style="left:1716.5px;top:360.2px;width:4px;height:4px;background:#616161;border-radius:50%;"></div>
<div class="t " style="left:1359.3px;top:384.00px;font-size:17.33px;line-height:21px;font-weight:400;color:#303030;letter-spacing:0.4px;-webkit-text-stroke:0.25px #303030;">Sales channels</div>
<div class="t " style="left:1380.7px;top:415.70px;font-size:17.33px;line-height:21px;font-weight:400;color:#303030;letter-spacing:0.65px;">Online Store</div>
<div class="b" style="left:1359.6px;top:421.49999999999994px;width:10.3px;height:10.3px;border:1.3px solid #616161;border-radius:3px;"></div>
<div class="t " style="left:1380.7px;top:448.10px;font-size:17.33px;line-height:21px;font-weight:400;color:#303030;letter-spacing:0.65px;">Shop</div>
<div class="b" style="left:1359.6px;top:453.9px;width:10.3px;height:10.3px;border:1.3px solid #616161;border-radius:3px;"></div>
<div class="t " style="left:1380.7px;top:479.80px;font-size:17.33px;line-height:21px;font-weight:400;color:#303030;letter-spacing:0.65px;">Point of Sale</div>
<div class="b" style="left:1359.6px;top:485.59999999999997px;width:10.3px;height:10.3px;border:1.3px solid #616161;border-radius:3px;"></div>
<svg class="b" style="left:1705.97px;top:412.47px;" width="26.67" height="26.67" viewBox="0 0 20 20"><path fill="none" stroke="#616161" stroke-width="1.35" stroke-linecap="round" stroke-linejoin="round" d="M9.4 15.6H6.4a2 2 0 0 1-2-2V7.2a2 2 0 0 1 2-2h7.2a2 2 0 0 1 2 2v1.6M4.5 8.3h11M7.2 3.8v2.4M12.8 3.8v2.4"/><circle cx="14" cy="14" r="3.1" fill="none" stroke="#616161" stroke-width="1.35"/><path fill="none" stroke="#616161" stroke-width="1.2" stroke-linecap="round" d="M13.8 12.6v1.5l.8.8"/></svg>
<div class="t " style="left:1380.7px;top:507.50px;font-size:17.33px;line-height:21px;font-weight:400;color:#616161;letter-spacing:0.47px;">Point of Sale has not been set up. Finish</div>
<div class="t " style="left:1380.7px;top:534.20px;font-size:17.33px;line-height:21px;font-weight:400;color:#616161;letter-spacing:0.62px;">the remaining steps to start selling in</div>
<div class="t " style="left:1380.7px;top:560.80px;font-size:17.33px;line-height:21px;font-weight:400;color:#616161;letter-spacing:0.62px;">person.</div>
<div class="t " style="left:1380.7px;top:588.50px;font-size:17.33px;line-height:21px;font-weight:400;color:#2350a6;letter-spacing:0.5px;text-decoration:underline;text-underline-offset:1.6px;text-decoration-thickness:1.3px;">Learn more</div>
<div class="t " style="left:1359.3px;top:639.50px;font-size:17.33px;line-height:21px;font-weight:400;color:#303030;letter-spacing:0.85px;-webkit-text-stroke:0.25px #303030;">Markets</div>
<div class="t " style="left:1380.7px;top:671.50px;font-size:17.33px;line-height:21px;font-weight:400;color:#303030;letter-spacing:0.65px;">International and United States</div>
<div class="b" style="left:1359.6px;top:677.3px;width:10.3px;height:10.3px;border:1.3px solid #616161;border-radius:3px;"></div>
<div class="b" style="left:1338px;top:738px;width:415px;height:520px;background:#ffffff;border-radius:13.5px;border:1px solid #e3e3e3;border-bottom-color:#d6d6d6;box-shadow:0 1px 1px rgba(26,26,26,0.06);"></div>
<div class="t " style="left:1359.4px;top:763.30px;font-size:17.33px;line-height:21px;font-weight:700;color:#303030;letter-spacing:0.2px;">Product organization</div>
<svg class="b" style="left:1542.3700000000001px;top:760.4699999999999px;" width="26.67" height="26.67" viewBox="0 0 20 20"><circle cx="10" cy="10" r="6.4" fill="none" stroke="#303030" stroke-width="1.45"/><path stroke="#303030" stroke-width="1.5" stroke-linecap="round" d="M10 9.3v3.9"/><circle cx="10" cy="6.9" r="0.95" fill="#303030"/></svg>
<div class="t " style="left:1359.2px;top:802.00px;font-size:17.33px;line-height:21px;font-weight:400;color:#303030;letter-spacing:0.8px;">Product category</div>
<div class="b" style="left:1359.4px;top:831.7px;width:372.3px;height:42px;background:#fdfdfd;border:1px solid #9a9a9a;border-top-color:#bdbdbd;border-bottom-color:#b0b0b0;box-shadow:inset 0 1px 0 #e6e6e6, inset 0 -1px 0 #e9e9e9;border-radius:10px;"></div>
<div class="t " style="left:1375.25px;top:841.70px;font-size:17.33px;line-height:21px;font-weight:400;color:#616161;letter-spacing:0.65px;">Search</div>
<div class="t " style="left:1359.2px;top:881.20px;font-size:17.33px;line-height:21px;font-weight:400;color:#616161;letter-spacing:0.3px;">Determines US</div>
<div class="t " style="left:1487.0px;top:881.20px;font-size:17.33px;line-height:21px;font-weight:400;color:#2350a6;letter-spacing:0.5px;text-decoration:underline;text-underline-offset:1.6px;text-decoration-thickness:1.3px;">tax rates</div>
<div class="t " style="left:1359.2px;top:941.00px;font-size:17.33px;line-height:21px;font-weight:400;color:#303030;letter-spacing:0.65px;">Product type</div>
<div class="b" style="left:1359.4px;top:970.8px;width:372.3px;height:41.5px;background:#fdfdfd;border:1px solid #9a9a9a;border-top-color:#bdbdbd;border-bottom-color:#b0b0b0;box-shadow:inset 0 1px 0 #e6e6e6, inset 0 -1px 0 #e9e9e9;border-radius:10px;"></div>
<div class="t " style="left:1374.8px;top:981.10px;font-size:17.33px;line-height:21px;font-weight:400;color:#616161;letter-spacing:0.8px;">Add custom category</div>
<div class="t " style="left:1359.2px;top:1037.20px;font-size:17.33px;line-height:21px;font-weight:400;color:#303030;letter-spacing:0.65px;">Vendor</div>
<div class="b" style="left:1359.4px;top:1066.3px;width:372.3px;height:42px;background:#fdfdfd;border:1px solid #9a9a9a;border-top-color:#bdbdbd;border-bottom-color:#b0b0b0;box-shadow:inset 0 1px 0 #e6e6e6, inset 0 -1px 0 #e9e9e9;border-radius:10px;"></div>
<div class="t " style="left:1359.2px;top:1133.00px;font-size:17.33px;line-height:21px;font-weight:400;color:#303030;letter-spacing:0.65px;">Collections</div>
<div class="b" style="left:1359.4px;top:1162.6px;width:372.3px;height:42px;background:#fdfdfd;border:1px solid #9a9a9a;border-top-color:#bdbdbd;border-bottom-color:#b0b0b0;box-shadow:inset 0 1px 0 #e6e6e6, inset 0 -1px 0 #e9e9e9;border-radius:10px;"></div>
<div class="b" style="left:520px;top:374px;width:425px;height:461px;background:#ffffff;border-radius:13px;box-shadow:0 0 0 1px rgba(0,0,0,0.08), 0 4px 8px -2px rgba(26,26,26,0.16), 0 1px 2px rgba(26,26,26,0.12);z-index:10;overflow:hidden;"><div class="b" style="left:0;top:0;width:425.5px;height:57px;background:#f7f7f7;"></div></div>
<div style="position:absolute;left:0;top:0;width:1920px;height:1200px;z-index:11;">
<div class="t " style="left:535.4000000000001px;top:390.90px;font-size:18.67px;line-height:22px;font-weight:700;color:#303030;letter-spacing:0.25px;">Generate product description</div>
<svg class="b" style="left:808.4699999999999px;top:388.87px;" width="26.67" height="26.67" viewBox="0 0 20 20"><circle cx="10" cy="10" r="6.5" fill="none" stroke="#616161" stroke-width="1.25"/><path stroke="#616161" stroke-width="1.35" stroke-linecap="round" d="M10 9.2v4.1"/><circle cx="10" cy="6.9" r="0.85" fill="#616161"/></svg>
<div class="t " style="left:535.0px;top:450.30px;font-size:17.33px;line-height:21px;font-weight:400;color:#303030;letter-spacing:0.65px;">Features and keywords</div>
<div class="b" style="left:535.5px;top:479.75px;width:394px;height:100.75px;background:#fdfdfd;border:1px solid #9a9a9a;border-top-color:#bdbdbd;border-bottom-color:#b0b0b0;box-shadow:inset 0 1px 0 #e6e6e6, inset 0 -1px 0 #e9e9e9;border-radius:10px;"></div>
<div class="t " style="left:550.5px;top:490.20px;font-size:17.33px;line-height:21px;font-weight:400;color:#616161;letter-spacing:0.6px;">Organic cotton, relaxed fit</div>
<div class="t " style="left:535.0px;top:600.00px;font-size:17.33px;line-height:21px;font-weight:400;color:#303030;letter-spacing:0.65px;">Tone of voice</div>
<div class="b" style="left:535.5px;top:628.8px;width:394px;height:42px;background:#fdfdfd;border:1px solid #9a9a9a;border-top-color:#bdbdbd;border-bottom-color:#b0b0b0;box-shadow:inset 0 1px 0 #e6e6e6, inset 0 -1px 0 #e9e9e9;border-radius:10px;"></div>
<div class="t " style="left:550.5px;top:639.50px;font-size:17.33px;line-height:21px;font-weight:400;color:#303030;letter-spacing:0.65px;">Expert</div>
<svg class="b" style="left:892.67px;top:636.67px;" width="26.67" height="26.67" viewBox="0 0 20 20"><path fill="none" stroke="#6b6b6b" stroke-width="1.3" stroke-linecap="round" stroke-linejoin="round" d="M6.5 7.6L10 4.1l3.5 3.5M6.5 12.1L10 15.6l3.5-3.5"/></svg>
<div class="t " style="left:535.0px;top:691.00px;font-size:17.33px;line-height:21px;font-weight:400;color:#303030;letter-spacing:0.6px;">Special instructions</div>
<div class="t " style="left:702.8px;top:691.00px;font-size:17.33px;line-height:21px;font-weight:400;color:#616161;letter-spacing:0.65px;">(optional)</div>
<div class="b" style="left:535.5px;top:719.5px;width:394px;height:41.7px;background:#fdfdfd;border:1px solid #9a9a9a;border-top-color:#bdbdbd;border-bottom-color:#b0b0b0;box-shadow:inset 0 1px 0 #e6e6e6, inset 0 -1px 0 #e9e9e9;border-radius:10px;"></div>
<div class="t " style="left:550.7px;top:730.80px;font-size:17.33px;line-height:21px;font-weight:400;color:#616161;letter-spacing:0.56px;">e.g. Replace some words with emoji</div>
<div class="b" style="left:535.3px;top:778px;width:394.5px;height:42.3px;background:#d4d4d4;border-radius:10.5px;"></div>
<div class="t " style="left:693.2px;top:788.50px;font-size:17.33px;line-height:21px;font-weight:700;color:#ffffff;letter-spacing:0.1px;">Generate</div>
</div>
</body></html>
